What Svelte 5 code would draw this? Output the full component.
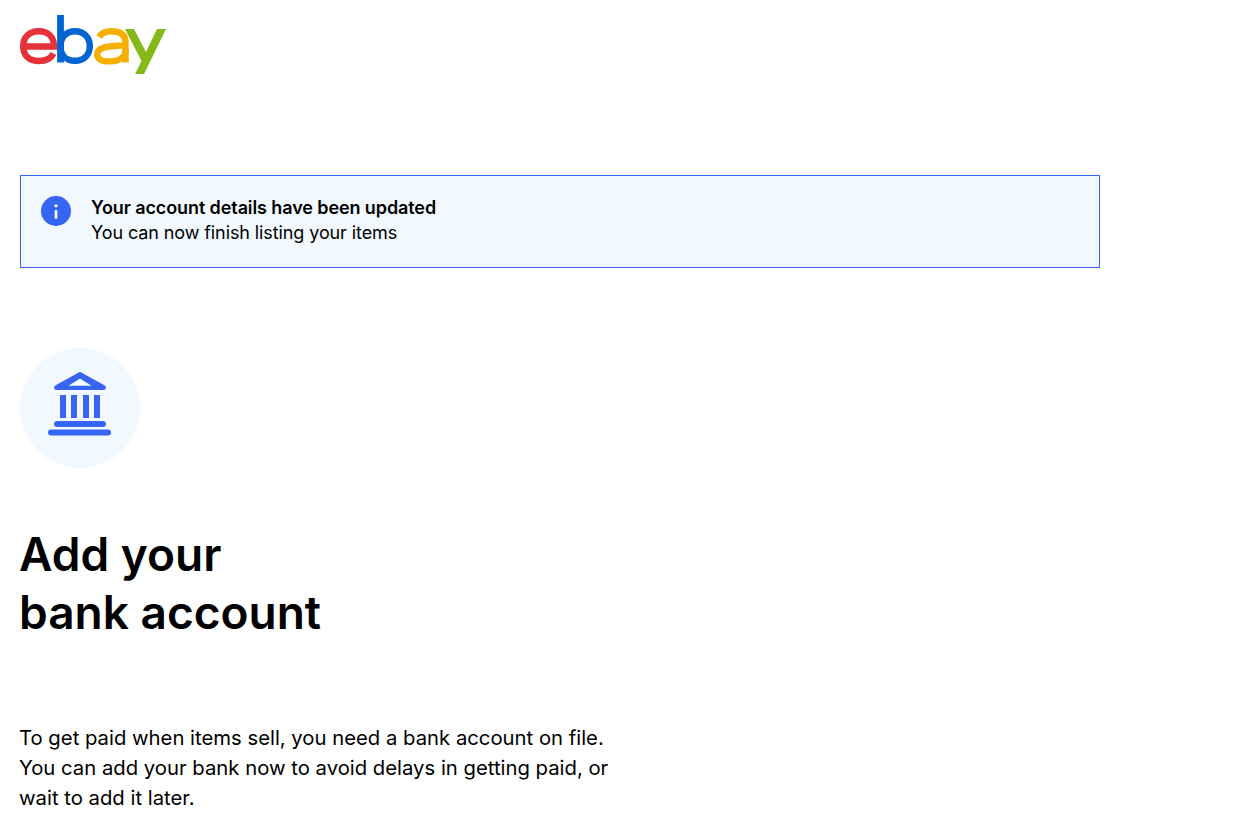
<script lang="ts">
  const logoStroke = 6.400;
</script>

<div class="page">
  <header class="header">
    <svg class="logo" viewBox="0 0 146 60" width="146" height="60" role="img" aria-label="eBay">
      <path d="M3.200 31.500h30.800c0-9.500-6-15.300-15.300-15.300C9.500 16.200 3.200 22 3.200 31c0 9.500 6 15 15.800 15 7.500 0 12-2.500 14.500-7.500" fill="none" stroke="#e53238" stroke-width={logoStroke} />
      <path d="M40.500 0v47.500" fill="none" stroke="#0064d2" stroke-width="6.800" />
      <path d="M40.500 31c0-9 6-14.800 14.500-14.800s14.800 6 14.800 14.800-5.800 14.800-14.800 14.800-14.500-5.800-14.500-14.800z" fill="none" stroke="#0064d2" stroke-width={logoStroke} />
      <path d="M79 22c2.500-4 7-5.800 12.500-5.800 8.500 0 14 3 14 11.300v13.500c0 2.300 0 4.500.2 6.500" fill="none" stroke="#f5af02" stroke-width={logoStroke} />
      <path d="M105.500 30.800c-3.500-.2-8-.2-12 .2-9 .6-16.300 2.200-16.300 8.200 0 5 4.800 7.200 11 7.200 9.500 0 17.300-3.500 17.300-11.500" fill="none" stroke="#f5af02" stroke-width={logoStroke} />
      <path d="M105 14h9l12 23 11-23h9l-22 45h-9l6.500-13z" fill="#86b817" />
    </svg>
  </header>

  <div class="alert">
    <svg class="alert-icon" viewBox="0 0 30 30" width="30" height="30" aria-hidden="true">
      <circle cx="15" cy="15" r="15" fill="#3665f3" />
      <rect x="13.700" y="14" width="2.600" height="9" rx="1.300" fill="#fff" />
      <circle cx="15" cy="9.800" r="1.600" fill="#fff" />
    </svg>
    <div class="alert-text">
      <strong>Your account details have been updated</strong>
      <span>You can now finish listing your items</span>
    </div>
  </div>

  <div class="bank-badge">
    <svg class="bank-icon" viewBox="0 0 72 72" width="72" height="72" aria-hidden="true">
      <path fill-rule="evenodd" d="M34.300.700a3 3 0 0 1 3.400 0L60.800 13.500C62.800 14.700 62 18 59.600 18H12.400C10 18 9.200 14.700 11.200 13.500zM36 6.500 24.500 13.700h23z" fill="#3665f3" />
      <path d="M16 23h6v23h-6zM27 23h6v23h-6zM39 23h6v23h-6zM50 23h6v23h-6z" fill="#3665f3" />
      <rect x="10" y="49" width="52" height="6" rx="3" fill="#3665f3" />
      <rect x="4" y="57.500" width="63" height="6" rx="3" fill="#3665f3" />
    </svg>
  </div>

  <h1>Add your<br />bank account</h1>

  <p>To get paid when items sell, you need a bank account on file.<br />You can add your bank now to avoid delays in getting paid, or<br />wait to add it later.</p>
</div>

<style>
  :global(body) {
    background: #fff;
  }

  .page {
    height: 840px;
    overflow: hidden;
    padding: 15px 0 0 20px;
    box-sizing: border-box;
    color: #000;
    font-family: Inter, "Liberation Sans", sans-serif;
  }

  .header {
    height: 160px;
  }

  .logo {
    display: block;
  }

  .alert {
    display: flex;
    gap: 20px;
    box-sizing: border-box;
    width: 1080px;
    height: 93px;
    padding: 20px;
    border: 1px solid #3665f3;
    background: #f1f8fe;
  }

  .alert-icon {
    flex: 0 0 auto;
  }

  .alert-text {
    display: flex;
    flex-direction: column;
    margin-top: -1px;
    font-size: 18px;
    letter-spacing: -0.1px;
    line-height: 25px;
  }

  .alert-text strong {
    font-weight: 600;
  }

  .bank-badge {
    display: flex;
    align-items: center;
    justify-content: center;
    width: 120px;
    height: 120px;
    margin-top: 80px;
    border-radius: 50%;
    background: #f1f8fe;
  }

  .bank-icon {
    display: block;
  }

  h1 {
    margin: 57px 0 0 -1px;
    font-size: 46px;
    font-weight: 600;
    line-height: 58px;
  }

  p {
    margin: 82px 0 0 -1px;
    font-size: 20.300px;
    line-height: 30px;
  }
</style>
